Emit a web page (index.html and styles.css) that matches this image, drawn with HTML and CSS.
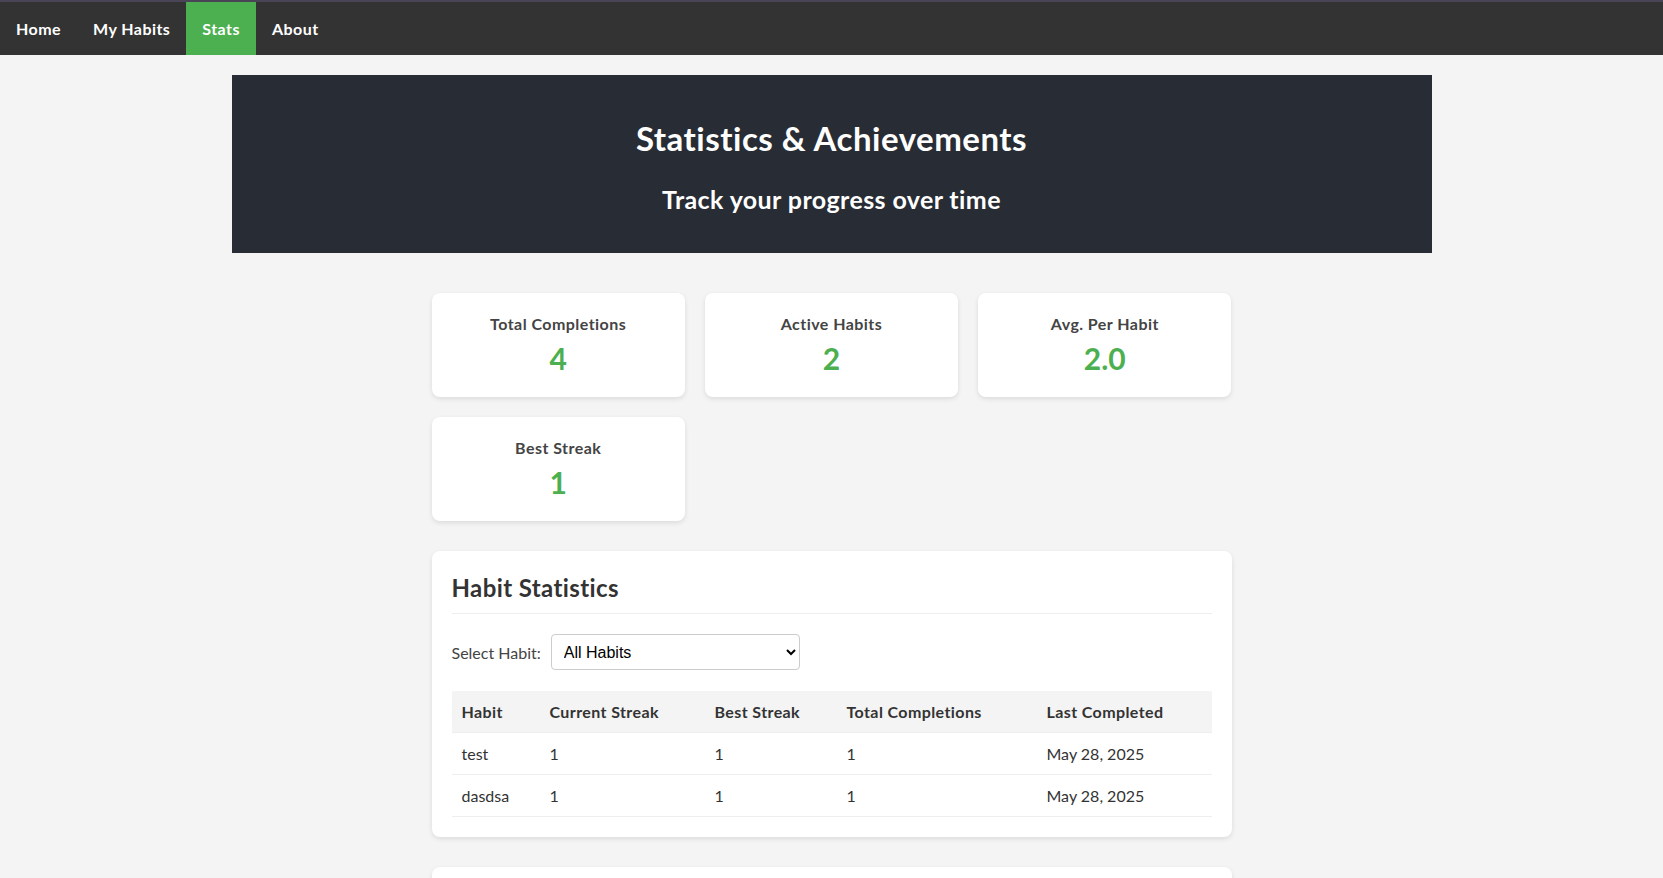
FILE: index.html
```html
<!DOCTYPE html>
<html lang="en">
<head>
<meta charset="utf-8">
<title>Stats - Habit Tracker</title>
<link rel="stylesheet" href="styles.css">
</head>
<body>
<nav class="topnav">
  <a href="#" class="nav-link">Home</a>
  <a href="#" class="nav-link">My Habits</a>
  <a href="#" class="nav-link active">Stats</a>
  <a href="#" class="nav-link">About</a>
</nav>
<main class="page">
  <header class="hero">
    <h1 class="hero-title">Statistics &amp; Achievements</h1>
    <h2 class="hero-sub">Track your progress over time</h2>
  </header>

  <section class="content">
    <div class="stat-grid">
      <div class="stat-card">
        <h3 class="stat-label">Total Completions</h3>
        <div class="stat-value">4</div>
      </div>
      <div class="stat-card">
        <h3 class="stat-label">Active Habits</h3>
        <div class="stat-value">2</div>
      </div>
      <div class="stat-card">
        <h3 class="stat-label">Avg. Per Habit</h3>
        <div class="stat-value">2.0</div>
      </div>
      <div class="stat-card">
        <h3 class="stat-label">Best Streak</h3>
        <div class="stat-value">1</div>
      </div>
    </div>

    <div class="panel">
      <h2 class="panel-title">Habit Statistics</h2>
      <div class="filter-row">
        <label class="filter-label" for="habit-select">Select Habit:</label>
        <select id="habit-select" class="filter-select">
          <option>All Habits</option>
          <option>test</option>
          <option>dasdsa</option>
        </select>
      </div>
      <table class="stats-table">
        <thead>
          <tr>
            <th class="col-habit">Habit</th>
            <th class="col-current">Current Streak</th>
            <th class="col-best">Best Streak</th>
            <th class="col-total">Total Completions</th>
            <th class="col-last">Last Completed</th>
          </tr>
        </thead>
        <tbody>
          <tr>
            <td>test</td>
            <td>1</td>
            <td>1</td>
            <td>1</td>
            <td>May 28, 2025</td>
          </tr>
          <tr>
            <td>dasdsa</td>
            <td>1</td>
            <td>1</td>
            <td>1</td>
            <td>May 28, 2025</td>
          </tr>
        </tbody>
      </table>
    </div>

    <div class="panel panel-last"></div>
  </section>
</main>
</body>
</html>
```

FILE: styles.css
```css
html, body {
  margin: 0;
  padding: 0;
}

body {
  background: #f4f4f4;
  font-family: Lato, "Open Sans", "Noto Sans", sans-serif;
  color: #333;
}

.topnav {
  display: flex;
  background: #333;
  border-top: 2px solid #4a4457;
}

.nav-link {
  display: block;
  padding: 14px 16px;
  line-height: 25px;
  font-size: 16px;
  font-weight: 700;
  letter-spacing: 0.45px;
  color: #fff;
  text-decoration: none;
}

.nav-link.active {
  background: #4caf50;
}

.page {
  width: 1200px;
  margin: 20px auto 0;
}

.hero {
  background: #282c34;
  color: #fff;
  text-align: center;
  padding: 20px;
}

.hero-title {
  margin: 22px 0 23px;
  font-size: 33px;
  line-height: 43px;
  font-weight: 700;
  letter-spacing: 0.5px;
}

.hero-sub {
  margin: 0 0 18px;
  font-size: 25px;
  line-height: 32px;
  font-weight: 700;
  letter-spacing: 0.4px;
}

.content {
  width: 800px;
  margin: 40px auto 0;
}

.stat-grid {
  display: grid;
  grid-template-columns: repeat(3, 1fr);
  gap: 20px;
}

.stat-card {
  background: #fff;
  border-radius: 8px;
  box-shadow: 0 2px 5px rgba(0, 0, 0, 0.1);
  padding: 20px 20px 22px;
  text-align: center;
}

.stat-label {
  margin: 0 0 6px;
  font-size: 16px;
  line-height: 22px;
  font-weight: 700;
  letter-spacing: 0.45px;
  color: #444;
}

.stat-value {
  font-size: 30px;
  line-height: 34px;
  font-weight: 700;
  color: #4caf50;
}

.panel {
  margin-top: 30px;
  background: #fff;
  border-radius: 8px;
  box-shadow: 0 2px 5px rgba(0, 0, 0, 0.1);
  padding: 20px;
}

.panel-title {
  margin: 0;
  padding: 2px 0 10px;
  font-size: 24px;
  line-height: 30px;
  font-weight: 700;
  letter-spacing: 0.4px;
  color: #333;
  border-bottom: 1px solid #eee;
}

.filter-row {
  display: flex;
  align-items: center;
  margin-top: 20px;
}

.filter-label {
  font-size: 16px;
  color: #444;
  margin-right: 10px;
}

.filter-select {
  width: 249px;
  height: 36px;
  padding: 6px 8px;
  font-family: "Liberation Sans", Arial, sans-serif;
  font-size: 16px;
  color: #000;
  background: #fff;
  border: 1px solid #ccc;
  border-radius: 4px;
}

.stats-table {
  width: 100%;
  margin-top: 21px;
  border-collapse: collapse;
  font-size: 16px;
}

.stats-table th,
.stats-table td {
  padding: 10px;
  line-height: 21px;
  text-align: left;
  border-bottom: 1px solid #eee;
}

.stats-table th {
  background: #f4f4f4;
  font-weight: 700;
  letter-spacing: 0.4px;
  color: #333;
}

.stats-table td {
  color: #333;
}

.col-habit { width: 68px; }
.col-current { width: 145px; }
.col-best { width: 112px; }
.col-total { width: 180px; }
.col-last { width: 155px; }

.panel-last {
  height: 120px;
}
```
